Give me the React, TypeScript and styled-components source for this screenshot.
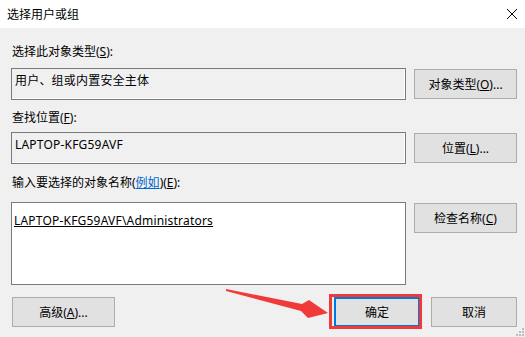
import React from "react";
import styled, { createGlobalStyle } from "styled-components";

const Global = createGlobalStyle`
  html, body { margin: 0; padding: 0; background: #f0f0f0; }
  body { font-family: "Noto Sans", "Noto Sans CJK SC", sans-serif; font-size: 12px; color: #000; }
`;

const Dialog = styled.div`
  position: relative;
  width: 525px;
  height: 337px;
  background: #f0f0f0;
  overflow: hidden;
`;

const TitleBar = styled.div`
  height: 28px;
  background: #fff;
  display: flex;
  align-items: center;
  justify-content: space-between;
  padding: 0 6px 0 7px;
  box-sizing: border-box;
  font-size: 12px;
`;

const Close = styled.svg`
  width: 12px;
  height: 12px;
  margin-right: 1px;
`;

const Content = styled.div`
  padding: 0 8px 0 11px;
  display: flex;
  flex-direction: column;
`;

const Label = styled.div<{ $top: number }>`
  margin-top: ${(p) => p.$top}px;
  margin-left: 1px;
  height: 16px;
  line-height: 16px;
  white-space: nowrap;
`;

const Row = styled.div<{ $top: number }>`
  margin-top: ${(p) => p.$top}px;
  display: flex;
  align-items: flex-start;
  gap: 8px;
`;

const Field = styled.div<{ $h: number; $white?: boolean }>`
  width: 395px;
  height: ${(p) => p.$h}px;
  box-sizing: border-box;
  border: 1px solid #7a7a7a;
  box-shadow: inset -1px -1px 0 #ffffff;
  background: ${(p) => (p.$white ? "#ffffff" : "#f0f0f0")};
  padding: ${(p) => (p.$white ? "10px 2px" : "4px 3px")};
  line-height: 16px;
  letter-spacing: 0.2px;
  white-space: nowrap;
`;

const Button = styled.div<{ $w: number; $default?: boolean; $top?: number }>`
  width: ${(p) => p.$w}px;
  height: 30px;
  margin-top: ${(p) => p.$top ?? 0}px;
  box-sizing: border-box;
  background: #e1e1e1;
  border: ${(p) => (p.$default ? "2px solid #0078d7" : "1px solid #adadad")};
  display: flex;
  align-items: center;
  justify-content: center;
  white-space: nowrap;
`;

const Link = styled.span`
  color: #0066cc;
  text-decoration: underline;
`;

const Under = styled.span`
  text-decoration: underline;
`;

const BottomRow = styled.div`
  margin-top: 12px;
  display: flex;
  justify-content: space-between;
  padding-left: 1px;
`;

const RightGroup = styled.div`
  display: flex;
  gap: 11px;
`;

const Highlight = styled.div`
  position: absolute;
  left: 329px;
  top: 294px;
  width: 93px;
  height: 35px;
  box-sizing: border-box;
  border: 3px solid #f03a3a;
  pointer-events: none;
`;

const Arrow = styled.svg`
  position: absolute;
  left: 0;
  top: 0;
  pointer-events: none;
`;

const Grip = styled.svg`
  position: absolute;
  right: 1px;
  bottom: 1px;
`;

export default function App() {
  return (
    <>
      <Global />
      <Dialog>
        <TitleBar>
          <span>选择用户或组</span>
          <Close viewBox="0 0 12 12">
            <path d="M1 1 L11 11 M11 1 L1 11" stroke="#000" strokeWidth="1" fill="none" />
          </Close>
        </TitleBar>
        <Content>
          <Label $top={16}>
            选择此对象类型(<Under>S</Under>):
          </Label>
          <Row $top={8}>
            <Field $h={32}>用户、组或内置安全主体</Field>
            <Button $w={103} $top={1}>
              对象类型(<Under>O</Under>)...
            </Button>
          </Row>
          <Label $top={10}>
            查找位置(<Under>F</Under>):
          </Label>
          <Row $top={6}>
            <Field $h={32}>LAPTOP-KFG59AVF</Field>
            <Button $w={103} $top={1}>
              位置(<Under>L</Under>)...
            </Button>
          </Row>
          <Label $top={11}>
            输入要选择的对象名称(<Link>例如</Link>)(<Under>E</Under>):
          </Label>
          <Row $top={11}>
            <Field $h={83} $white>
              <Under>LAPTOP-KFG59AVF\Administrators</Under>
            </Field>
            <Button $w={103} $top={1}>
              检查名称(<Under>C</Under>)
            </Button>
          </Row>
          <BottomRow>
            <Button $w={103}>
              高级(<Under>A</Under>)...
            </Button>
            <RightGroup>
              <Button $w={86} $default>
                确定
              </Button>
              <Button $w={86}>取消</Button>
            </RightGroup>
          </BottomRow>
        </Content>
        <Highlight />
        <Arrow width="525" height="337" viewBox="0 0 525 337">
          <polygon
            points="226,289 302,304 309,300 328,313 308,318 301,311 226,291"
            fill="#f03a3a"
          />
        </Arrow>
        <Grip width="8" height="8" viewBox="0 0 8 8">
          <rect x="6" y="0" width="2" height="2" fill="#bcbcbc" />
          <rect x="3" y="3" width="2" height="2" fill="#bcbcbc" />
          <rect x="6" y="3" width="2" height="2" fill="#bcbcbc" />
          <rect x="0" y="6" width="2" height="2" fill="#bcbcbc" />
          <rect x="3" y="6" width="2" height="2" fill="#bcbcbc" />
          <rect x="6" y="6" width="2" height="2" fill="#bcbcbc" />
        </Grip>
      </Dialog>
    </>
  );
}
